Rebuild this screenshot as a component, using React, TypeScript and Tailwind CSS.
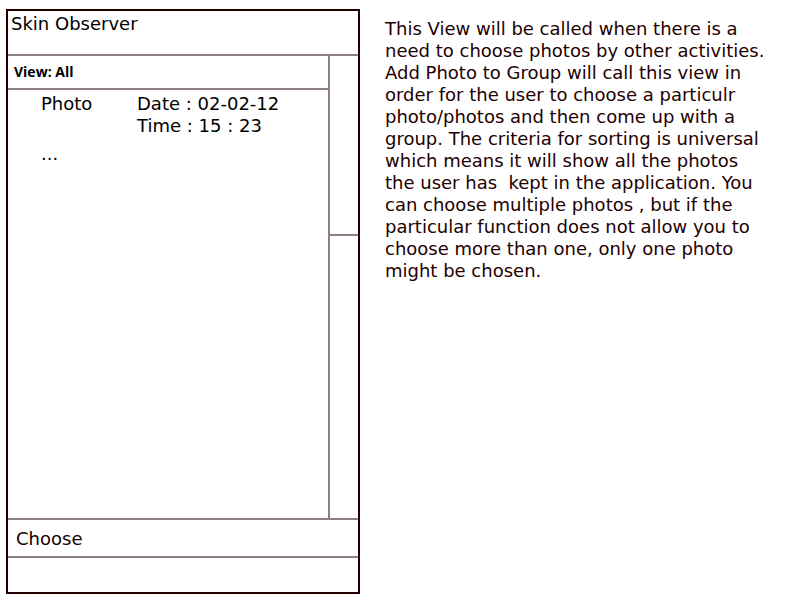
const description =
  "This View will be called when there is a need to choose photos by other activities. Add Photo to Group will call this view in order for the user to choose a particulr photo/photos and then come up with a group. The criteria for sorting is universal which means it will show all the photos the user has  kept in the application. You can choose multiple photos , but if the particular function does not allow you to choose more than one, only one photo might be chosen.";

const photos = [{ name: "Photo", date: "02-02-12", time: "15 : 23" }];

function PhotoList() {
  return (
    <ul className="flex-1 pt-[3px] pl-[33px] text-black">
      {photos.map((photo) => (
        <li key={photo.date} className="flex">
          <span className="w-24">{photo.name}</span>
          <div>
            <p>Date : {photo.date}</p>
            <p>Time : {photo.time}</p>
          </div>
        </li>
      ))}
      <li className="mt-1.5">...</li>
    </ul>
  );
}

function Scrollbar() {
  return (
    <div className="w-[30px] border-l-2 border-[#8f7f7f]">
      <div className="h-[39%] border-b-2 border-[#8f7f7f]" />
    </div>
  );
}

function Device() {
  return (
    <section className="flex w-[354px] shrink-0 flex-col border-2 border-[#230000]">
      <header className="h-[45px] border-b-2 border-[#8f7f7f] pt-0.5 pl-[3px] text-black">
        <h1>Skin Observer</h1>
      </header>
      <div className="flex flex-1">
        <div className="flex flex-1 flex-col">
          <h2 className="flex h-[34px] items-center border-b-2 border-[#8f7f7f] pl-1.5 font-['Open_Sans',sans-serif] text-sm font-bold text-black">
            View: All
          </h2>
          <PhotoList />
        </div>
        <Scrollbar />
      </div>
      <button
        type="button"
        className="flex h-10 items-center border-y-2 border-[#8f7f7f] pt-0.5 pl-2 text-left"
      >
        Choose
      </button>
      <footer className="h-[34px]" />
    </section>
  );
}

export default function App() {
  return (
    <main className="flex min-h-screen bg-white pt-[9px] pr-8 pb-1.5 pl-1.5 font-['DejaVu_Sans',sans-serif] text-[18px] leading-[22px] text-[#230000]">
      <Device />
      <p className="flex-1 pt-[9px] pl-[25px] whitespace-pre-wrap">{description}</p>
    </main>
  );
}
